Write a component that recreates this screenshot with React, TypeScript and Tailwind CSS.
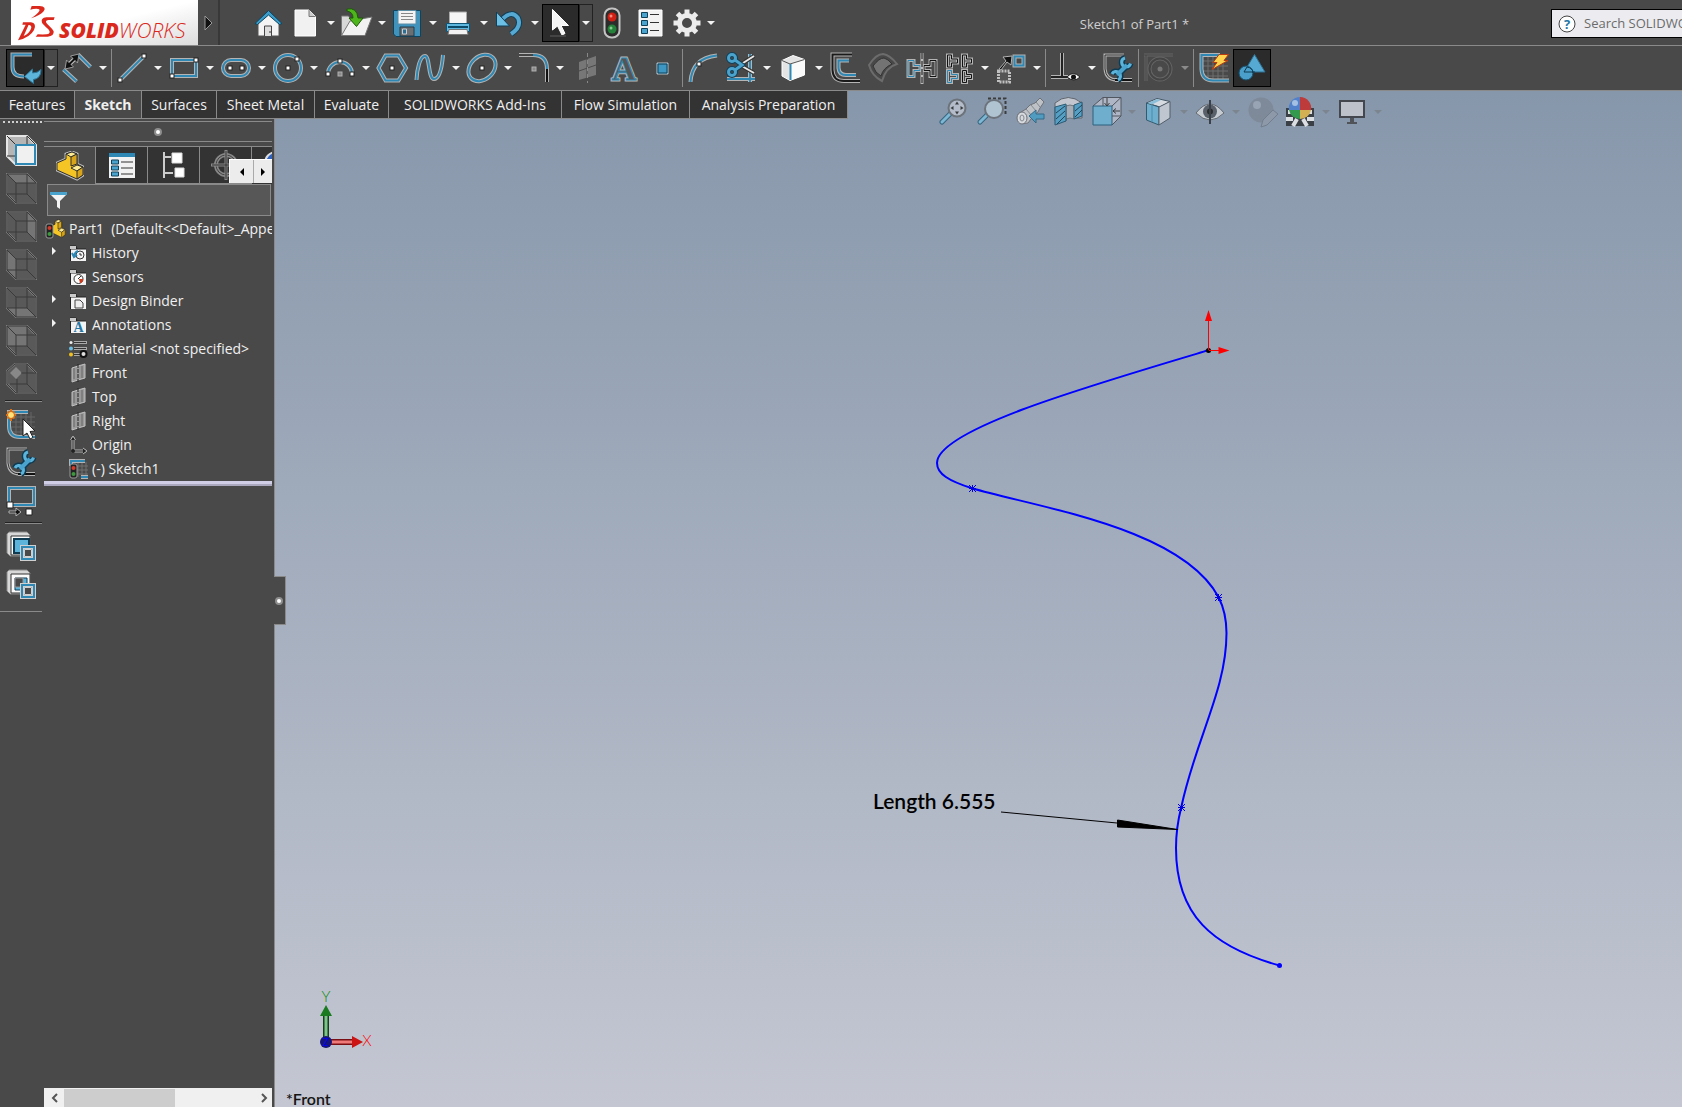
import type { ReactNode } from "react";
import clsx from "clsx";

const BLUE = "#2f88b3";
const HALO = "#b4b4b4";

/* ---------- drawing helpers ---------- */

function Svg({ w = 38, h = 38, children }: { w?: number; h?: number; children: ReactNode }) {
  return (
    <svg width={w} height={h} viewBox={`0 0 ${w} ${h}`} fill="none" className="block shrink-0" aria-hidden="true">
      {children}
    </svg>
  );
}

// coloured line with a light outline round it
function Line({ d, c = BLUE, halo = HALO, w = 2 }: { d: string; c?: string; halo?: string; w?: number }) {
  return (
    <>
      <path d={d} stroke={halo} strokeWidth={w + 2} />
      <path d={d} stroke={c} strokeWidth={w} />
    </>
  );
}

function Node({ x, y, dim }: { x: number; y: number; dim?: boolean }) {
  return <rect x={x - 2} y={y - 2} width="4" height="4" fill={dim ? "#8a8a8a" : "#fff"} stroke={dim ? "#b0b0b0" : "#222"} />;
}

// double-ended spanner, jaws open at the top right and bottom left
function Wrench() {
  const jaws = "M26 9a4.500 4.500 0 1 0 5.500 5.500M13 25a4.500 4.500 0 1 1 6 6";
  return (
    <>
      <path d={jaws} stroke="#0f3b52" strokeWidth="6" />
      <path d="M18 26l10-10" stroke="#0f3b52" strokeWidth="7" />
      <path d={jaws} stroke="#5db4db" strokeWidth="3" />
      <path d="M18 26l10-10" stroke="#4aa3cc" strokeWidth="4" />
    </>
  );
}

/* ---------- title bar icons ---------- */

const HomeIcon = (
  <Svg w={37}>
    <path d="M8 18v14h21V18L18.500 9z" fill="#f4f4f4" stroke="#555" />
    <path d="M14.500 32V22h7v10" fill="#ddd" stroke="#444" />
    <path d="M20 27v2" stroke="#333" />
    <path d="M5 19.500L18.500 6.500 32 19.500l-2.500 1L18.500 11 7.500 20.500z" fill="#3c9cc9" stroke="#0d4560" />
  </Svg>
);
const NewIcon = (
  <Svg w={37}>
    <path d="M8 6h14l6.500 6.500V32H8z" fill="#f1f1f1" stroke="#fff" />
    <path d="M22 6v6.500h6.500" fill="#ccc" stroke="#777" />
  </Svg>
);
const OpenIcon = (
  <Svg w={37}>
    <path d="M3.500 31V12h7l2 3h15v5z" fill="#d8d8d8" stroke="#777" />
    <path d="M3.500 31.500L12 17l22-4-7 18.500z" fill="#f2f2f2" stroke="#777" />
    <path d="M9 5q10-2 11 9h5l-6.500 8.500L11 14h4q0-6-6-7z" fill="#4fb51c" stroke="#1d5a08" />
  </Svg>
);
const SaveIcon = (
  <Svg w={37}>
    <path d="M4.500 6.500h27v26H7l-2.500-2.500z" fill="#3f93bd" stroke="#0d4560" />
    <path d="M9 6.500h18V20H9z" fill="#f3f3f3" stroke="#5c8ca3" />
    <path d="M12 9.500h12M12 12.500h12M12 15.500h12" stroke="#888" />
    <path d="M11 23h14v9H11z" fill="#6a6f73" stroke="#263c48" />
    <path d="M13.500 25h4v5h-4z" fill="#2a6e91" stroke="#ccc" />
  </Svg>
);
const PrintIcon = (
  <Svg w={37}>
    <path d="M9.500 8h17v12h-17z" fill="#f6f6f6" stroke="#aaa" />
    <path d="M6.500 19.500h23v8h-23z" fill="#5db7df" stroke="#0f5474" />
    <path d="M8 23h20" stroke="#0b4a68" strokeWidth="2" />
    <path d="M9 25.500h18l1 5H8z" fill="#f2f2f2" stroke="#777" />
  </Svg>
);
const UndoIcon = (
  <Svg w={37}>
    <path d="M12 14.500Q21 6 27 14q4 9-7 16" stroke="#123f57" strokeWidth="6" />
    <path d="M5.500 8v14h13z" fill="#6cc0e6" stroke="#123f57" />
    <path d="M12 14.500Q21 6 27 14q4 9-7 16" stroke="#55a9d2" strokeWidth="4" />
  </Svg>
);
const SelectIcon = (
  <Svg w={37}>
    <path d="M10.500 5.500V26l5-4 4.500 9 3-1.500-4-8h7.500z" fill="#f5f5f5" stroke="#fff" />
    <path d="M8 32h16" stroke="#444" strokeWidth="2" />
  </Svg>
);
const RebuildIcon = (
  <Svg w={37}>
    <rect x="11.500" y="4.500" width="15" height="29" rx="7" fill="#2c2c2c" stroke="#c4c4c4" strokeWidth="2" />
    <circle cx="19" cy="13" r="4.500" fill="#cf1f14" />
    <circle cx="18" cy="12" r="1.500" fill="#f2877c" />
    <circle cx="19" cy="25" r="4.500" fill="#25813a" />
    <circle cx="18" cy="24" r="1.500" fill="#86cc90" />
  </Svg>
);
const ListIcon = (
  <Svg w={37}>
    <path d="M9 6h23v26H9z" fill="#f2f2f2" stroke="#fff" />
    <path d="M11.500 8.500h6v5h-6zM11.500 16.500h6v5h-6zM11.500 24.500h6v5h-6z" fill="#4aa3cc" stroke="#0e4059" />
    <path d="M20 10.500h9M20 18.500h9M20 26.500h9" stroke="#333" />
  </Svg>
);
const GearIcon = (
  <Svg w={37}>
    <g transform="translate(20 19)" stroke="#ececec">
      <circle r="7.500" strokeWidth="5" />
      <path
        d="M0-9V-13.500M0 9V13.500M-9 0H-13.500M9 0H13.500M6.500-6.500L9.500-9.500M-6.500 6.500L-9.500 9.500M6.500 6.500L9.500 9.500M-6.500-6.500L-9.500-9.500"
        strokeWidth="5"
      />
    </g>
  </Svg>
);

/* ---------- sketch toolbar icons ---------- */

const ExitSketchIcon = (
  <Svg>
    <Line d="M26 5.500H6.500V18Q6.500 27.500 18 27.500" />
    <path d="M18.500 27.500l8-7.500v4q5 0 8.500-3.500 0 9-7.500 10v4z" fill="#5db4db" stroke="#2b7599" />
  </Svg>
);
const DimensionIcon = (
  <Svg>
    <Line d="M20 5.500L32.500 18M5.500 20.500L18.500 32.500" />
    <path d="M10 16.500l8.500-8.500" stroke="#c8c8c8" strokeWidth="4" />
    <path d="M7 20l1.500-9 7 7zM21 5l-8.500 2 7 7z" fill="#111" stroke="#999" />
    <path d="M10 16.500l8-8" stroke="#111" strokeWidth="2" />
  </Svg>
);
const LineIcon = (
  <Svg>
    <Line d="M7 31L31 7" />
    <Node x={7} y={31} />
    <Node x={31} y={7} />
  </Svg>
);
const RectIcon = (
  <Svg>
    <Line d="M7 11h24v16H7z" />
    <Node x={31} y={11} />
    <Node x={7} y={27} />
  </Svg>
);
const SlotIcon = (
  <Svg>
    <Line d="M14 11h10a8 8 0 0 1 0 16H14a8 8 0 0 1 0-16z" />
    <Node x={13} y={19} />
    <Node x={25} y={19} />
  </Svg>
);
const CircleIcon = (
  <Svg>
    <Line d="M19 6a13 13 0 1 1 0 26a13 13 0 1 1 0-26z" />
    <Node x={19} y={19} />
    <Node x={28} y={10} />
  </Svg>
);
const ArcIcon = (
  <Svg>
    <Line d="M7 25a12 12 0 0 1 24 0" />
    <Node x={7} y={25} />
    <Node x={31} y={25} />
    <Node x={19} y={12} />
    <Node x={19} y={25} dim />
  </Svg>
);
const PolygonIcon = (
  <Svg>
    <Line d="M5.500 19L12.500 6.500h13L33 19l-7.500 12.500h-13z" />
    <Node x={19} y={19} />
  </Svg>
);
const SplineIcon = (
  <Svg>
    <Line d="M5.500 31C6 20 9 7 14 7S17 30 23 30S31 18 32 6" />
  </Svg>
);
const EllipseIcon = (
  <Svg>
    <g transform="rotate(-42 19 19)">
      <ellipse cx="19" cy="19" rx="15" ry="11.500" stroke={HALO} strokeWidth="4" />
      <ellipse cx="19" cy="19" rx="15" ry="11.500" stroke={BLUE} strokeWidth="2" />
    </g>
    <Node x={19} y={19} />
  </Svg>
);
const FilletIcon = (
  <Svg>
    <Line d="M4 6h14" c="#444" />
    <Line d="M32 19v14" c="#111" />
    <Line d="M18 6q14 0 14 14" />
    <Node x={19} y={20} dim />
  </Svg>
);
const PlaneIcon = (
  <Svg>
    <path d="M12 13l17-6v19l-17 5z" fill="#777" />
    <path d="M12 22l17-6M20 4v30" stroke="#4a4a4a" />
    <path d="M20.500 4v30" stroke="#888" strokeDasharray="4 3" />
  </Svg>
);
const TextIcon = (
  <Svg>
    <text x="19" y="31" textAnchor="middle" fontFamily="Liberation Serif, serif" fontWeight="700" fontSize="34" fill="#b4b4b4" stroke="#b4b4b4" strokeWidth="3">
      A
    </text>
    <text x="19" y="31" textAnchor="middle" fontFamily="Liberation Serif, serif" fontWeight="700" fontSize="34" fill="#555" stroke="#2f88b3" aria-hidden="true">
      A
    </text>
  </Svg>
);
const PointIcon = (
  <Svg>
    <path d="M14 14h11v11H14z" fill="#3d97c2" stroke="#b9c4ca" />
    <path d="M15 15h9v9h-9z" stroke="#0e4059" />
  </Svg>
);
const ConvertIcon = (
  <Svg>
    <Line d="M6.500 33Q8 9 33 6.500" />
    <Node x={15} y={15} />
  </Svg>
);
const TrimIcon = (
  <Svg>
    <Line d="M28 5v28M5 30h28" />
    <path d="M18 16l14-9M18 16l14 8" stroke="#333" strokeWidth="4" />
    <path d="M18 16l14-9M18 16l14 8" stroke="#e8e8e8" strokeWidth="2" />
    <circle cx="10" cy="9" r="3.500" stroke="#123f57" strokeWidth="5" />
    <circle cx="10" cy="23" r="3.500" stroke="#123f57" strokeWidth="5" />
    <path d="M13 11l7 5-7 5" stroke="#123f57" strokeWidth="5" />
    <circle cx="10" cy="9" r="3.500" stroke="#4aa3cc" strokeWidth="3" />
    <circle cx="10" cy="23" r="3.500" stroke="#4aa3cc" strokeWidth="3" />
    <path d="M13 11l7 5-7 5" stroke="#4aa3cc" strokeWidth="3" />
  </Svg>
);
const SolidCubeIcon = (
  <Svg>
    <path d="M8 11.500L19 6.500l11.500 4V26L16 31.500 8 27z" fill="#e4e4e4" stroke="#fff" />
    <path d="M16 15l14.500-4.500V26L16 31.500z" fill="#fafafa" />
    <path d="M8 11.500l8 3.500 14.500-4.500" stroke="#555" />
    <path d="M16.500 15v16" stroke={BLUE} strokeWidth="2" />
  </Svg>
);
const OffsetIcon = (
  <Svg>
    <Line d="M26 5.500H6.500V21Q7 32 18 32H34" c="#1a1a1a" />
    <Line d="M23 11.500H12.500V19Q13 26 20 26H30" />
  </Svg>
);
const SurfaceOffsetIcon = (
  <Svg>
    <path d="M5 16Q12 5 19 5q7 1 14 10-11 3-15 17Q8 27 5 16z" fill="#484848" stroke="#6c6c6c" strokeWidth="2" />
    <path d="M9 17q6-8 11-8 4 1 8 6-9 4-11 12-6-3-8-10z" fill="#737373" stroke="#333" />
  </Svg>
);
const MirrorIcon = (
  <Svg>
    <Line d="M6 11.500h6v5h6v5h-6v6H6z" w={1} />
    <Line d="M34 11.500h-6v5h-6v5h6v6h6z" c="#111" w={1} />
    <path d="M20 4v31" stroke="#bbb" strokeWidth="3" />
    <path d="M20 4v31" stroke="#111" strokeDasharray="6 2" />
  </Svg>
);
const PatternIcon = (
  <Svg>
    <Line d="M7.500 6h4v4h6v4h-6v4h-4z" c="#111" w={1} />
    <Line d="M22.500 6h4v4h5v4h-5v4h-4z" c="#111" w={1} />
    <Line d="M7.500 21.500h4v4h6v4h-6v4h-4z" w={1} />
    <Line d="M22.500 21.500h4v4h5v4h-5v4h-4z" c="#111" w={1} />
  </Svg>
);
const MoveIcon = (
  <Svg>
    <Line d="M22.500 7.500h9v9h-9z" />
    <path d="M6.500 22h11v11h-11z" fill="#555" stroke="#c0c0c0" strokeWidth="3" strokeDasharray="2 1" />
    <path d="M7 20l7-8-3-4 9-1-1 9-4-3-6 8z" fill="#111" stroke="#b4b4b4" />
  </Svg>
);
const RelationsIcon = (
  <Svg>
    <Line d="M15 4v24M4 28h17" c="#222" />
    <path d="M20 28q6-7 13 0-6 6-13 0z" fill="#f4f4f4" stroke="#222" />
    <circle cx="26.500" cy="28" r="2.500" fill="#111" />
  </Svg>
);
const RepairIcon = (
  <Svg>
    <Line d="M25 6H6V20Q7 31 18 31" c="#333" w={1} />
    <Line d="M16 31H33" c="#111" />
    <Wrench />
  </Svg>
);
const QuickSnapIcon = (
  <Svg>
    <Line d="M4 6h29M6 6v26" c="#444" halo="#666" w={1} />
    <circle cx="20" cy="20" r="10.500" stroke="#666" strokeWidth="4" />
    <circle cx="20" cy="20" r="10.500" stroke="#444" strokeWidth="2" />
    <circle cx="20" cy="20" r="2.500" fill="#777" />
  </Svg>
);
const RapidIcon = (
  <Svg>
    <path d="M13 6v26M18 6v26M23 6v26M28 6v26M7 12h26M7 17h26M7 22h26M7 27h26" stroke="#6e6e6e" />
    <Line d="M25 6H6.500V20Q7 31.500 18 31.500H34" />
    <path d="M24 5.500h9.500l-4.500 6h4L17 20.500l5-7h-4z" fill="#ffd34d" stroke="#b83a10" />
  </Svg>
);
const ShapesIcon = (
  <Svg>
    <path d="M21.500 5.500L32 23H11z" fill="#55a9d2" stroke="#2d6f91" />
    <circle cx="13" cy="24" r="7" fill="#4aa0ca" stroke="#17506e" />
    <path d="M11 23h11M11 23l3-5q6 1 6 6" stroke="#0e3a52" />
  </Svg>
);

/* ---------- view toolbar icons ---------- */

const ZoomFitIcon = (
  <Svg>
    <path d="M15 21l-8 8" stroke="#2c5f7a" strokeWidth="5" strokeLinecap="round" />
    <path d="M15 21l-8 8" stroke="#7dbbd8" strokeWidth="3" strokeLinecap="round" />
    <circle cx="22" cy="15" r="8.500" fill="#b8c1cc" stroke="#6a6f76" strokeWidth="2" />
    <path d="M22 8.500l2 3h-4zM22 21.500l2-3h-4zM15.500 15l3-2v4zM28.500 15l-3-2v4z" fill="#333" />
  </Svg>
);
const ZoomAreaIcon = (
  <Svg>
    <path d="M15 5.500h17.500v17" stroke="#333" strokeWidth="2" strokeDasharray="3 2" />
    <path d="M14 22l-7 7" stroke="#2c5f7a" strokeWidth="5" strokeLinecap="round" />
    <path d="M14 22l-7 7" stroke="#7dbbd8" strokeWidth="3" strokeLinecap="round" />
    <circle cx="21" cy="16" r="9" fill="#b4c8d6" stroke="#6a6f76" strokeWidth="2" />
  </Svg>
);
const PrevViewIcon = (
  <Svg>
    <path d="M7 21l8-5 4-4 5-2 5-5 4 4-4 6-2 4-4 3-6 8q-10 3-10-9z" fill="#c4c7cb" stroke="#6b6e73" />
    <path d="M15 16l6 7M20 12l5 6M25 9l4 5" stroke="#85888d" />
    <ellipse cx="11" cy="25" rx="5" ry="6" fill="#dfe1e4" stroke="#6b6e73" />
    <ellipse cx="11" cy="25" rx="2" ry="3" stroke="#85888d" />
    <path d="M18 23l7-6v4h8v5h-8v4z" fill="#4a9dc4" stroke="#2d6685" />
  </Svg>
);
const SectionIcon = (
  <Svg>
    <path d="M6 10q13-11 27 0v15h-8V13h-8v15H6z" fill="#c9cdd3" stroke="#5a6067" />
    <path d="M17 13q4-2 8 0v13q-4-2-8 0z" fill="#a9afb8" stroke="#6d737a" />
    <path d="M6 14l11-3v17l-11 4zM25 12l8-3v14l-8 3z" fill="#4fa0c6" stroke="#24546d" />
    <path d="M7 20l9-7M7 26l9-8M8 31l8-8M26 18l7-6M26 24l7-7" stroke="#163c50" />
  </Svg>
);
const OrientationIcon = (
  <Svg>
    <path d="M6 13l10-8.500h18V23l-9 9" fill="#b4bac8" stroke="#4c5158" />
    <path d="M16 4.500V13M25 13l9-8.500M25 23h9" stroke="#4c5158" />
    <path d="M6 13h19v19H6z" fill="#6db1d1" stroke="#245b78" />
    <path d="M20 5v8M17.500 10l2.500 3 2.500-3M33 18h-7M29 15.500l-3 2.500 3 2.500" stroke="#333" />
  </Svg>
);
const DisplayStyleIcon = (
  <Svg>
    <path d="M7.500 10L18 5.500l13 3-10 5.500z" fill="#dfe3e7" stroke="#3c4f5c" />
    <path d="M7.500 10L20 14v18L7.500 27z" fill="#6db1d1" stroke="#2c5467" />
    <path d="M20 14l11-5.500V25l-11 7z" fill="#c6ccd4" stroke="#4d5964" />
    <path d="M8.500 10L18 6l4 1-9 4.500z" fill="#8cc4de" />
    <path d="M13 12v17" stroke="#3f8db2" />
  </Svg>
);
const HideShowIcon = (
  <Svg>
    <path d="M5 20Q19 2 33 20 19 34 5 20z" fill="#cdd1d6" stroke="#5f656c" />
    <circle cx="19" cy="18.500" r="7" fill="#555b63" />
    <circle cx="19" cy="18.500" r="3" fill="#222" />
    <path d="M19 7v24" stroke="#33383e" strokeWidth="2" />
  </Svg>
);
const AppearanceIcon = (
  <Svg>
    <circle cx="18" cy="17" r="12.500" fill="#7e8998" />
    <circle cx="14" cy="12" r="4" fill="#9aa5b4" />
    <path d="M18 34l2-7 10-10 5 4-11 11z" fill="#8e99a8" stroke="#707b8a" />
  </Svg>
);
const SceneIcon = (
  <Svg>
    <path d="M5 15h28v18H5z" fill="#33373c" />
    <path d="M7 19h5M26 19h5M5 26h7M26 26h7M12 33l4-7M26 33l-4-7" stroke="#e4e6e9" strokeWidth="4" />
    <path d="M19 4a11 11 0 0 0-11 13h11z" fill="#4d7fce" />
    <path d="M19 4a11 11 0 0 1 11 13H19z" fill="#c3322f" />
    <path d="M8 17a11 11 0 0 0 11 9v-9z" fill="#2a9a43" />
    <path d="M30 17a11 11 0 0 1-11 9v-9z" fill="#dcb34a" />
    <circle cx="14" cy="10" r="3" fill="#a9c4ea" />
  </Svg>
);
const MonitorIcon = (
  <Svg>
    <path d="M7 8h24v16H7z" fill="#c3c7ce" stroke="#3d4044" strokeWidth="2" />
    <path d="M17 25h4v4h3v2H14v-2h3z" fill="#4a4d51" />
  </Svg>
);

/* ---------- buttons ---------- */

type Tool = {
  label: string;
  icon: ReactNode;
  menu?: boolean;
  on?: boolean;
  off?: boolean;
  sep?: boolean; // divider after this tool
};

function Caret({ color = "#f2f2f2" }: { color?: string }) {
  return (
    <svg width="8" height="4" viewBox="0 0 8 4" className="block" aria-hidden="true">
      <path d="M0 0h8L4 4z" fill={color} />
    </svg>
  );
}

function ToolButton({ tool, caret }: { tool: Tool; caret?: string }) {
  return (
    <>
      <button
        type="button"
        aria-label={tool.label}
        className={clsx("h-[38px] shrink-0", tool.on && "bg-[#2b2b2b] outline-1 -outline-offset-1 outline-black")}
      >
        {tool.icon}
      </button>
      {tool.menu && (
        <button
          type="button"
          aria-label={`${tool.label} options`}
          className={clsx(
            "flex h-[38px] w-[14px] shrink-0 items-center justify-center",
            tool.on && "outline-1 -outline-offset-1 outline-[#222]"
          )}
        >
          <Caret color={tool.off ? "#8a8a8a" : caret} />
        </button>
      )}
      {tool.sep && <span className="mx-px h-[38px] w-px shrink-0 bg-[#8a8a8a]" />}
    </>
  );
}

const FILE_TOOLS: Tool[] = [
  { label: "Home", icon: HomeIcon },
  { label: "New", icon: NewIcon, menu: true },
  { label: "Open", icon: OpenIcon, menu: true },
  { label: "Save", icon: SaveIcon, menu: true },
  { label: "Print", icon: PrintIcon, menu: true },
  { label: "Undo", icon: UndoIcon, menu: true },
  { label: "Select", icon: SelectIcon, menu: true, on: true },
  { label: "Rebuild", icon: RebuildIcon },
  { label: "File properties", icon: ListIcon },
  { label: "Options", icon: GearIcon, menu: true },
];

const SKETCH_TOOLS: Tool[] = [
  { label: "Exit sketch", icon: ExitSketchIcon, menu: true, on: true },
  { label: "Smart dimension", icon: DimensionIcon, menu: true, sep: true },
  { label: "Line", icon: LineIcon, menu: true },
  { label: "Rectangle", icon: RectIcon, menu: true },
  { label: "Slot", icon: SlotIcon, menu: true },
  { label: "Circle", icon: CircleIcon, menu: true },
  { label: "Arc", icon: ArcIcon, menu: true },
  { label: "Polygon", icon: PolygonIcon },
  { label: "Spline", icon: SplineIcon, menu: true },
  { label: "Ellipse", icon: EllipseIcon, menu: true },
  { label: "Fillet", icon: FilletIcon, menu: true },
  { label: "Plane", icon: PlaneIcon },
  { label: "Text", icon: TextIcon },
  { label: "Point", icon: PointIcon, sep: true },
  { label: "Convert entities", icon: ConvertIcon },
  { label: "Trim entities", icon: TrimIcon, menu: true },
  { label: "Convert solid", icon: SolidCubeIcon, menu: true },
  { label: "Offset entities", icon: OffsetIcon },
  { label: "Offset on surface", icon: SurfaceOffsetIcon },
  { label: "Mirror entities", icon: MirrorIcon },
  { label: "Linear pattern", icon: PatternIcon, menu: true },
  { label: "Move entities", icon: MoveIcon, menu: true, sep: true },
  { label: "Display relations", icon: RelationsIcon, menu: true },
  { label: "Repair sketch", icon: RepairIcon, sep: true },
  { label: "Quick snaps", icon: QuickSnapIcon, menu: true, off: true, sep: true },
  { label: "Rapid sketch", icon: RapidIcon },
  { label: "Shaded contours", icon: ShapesIcon, on: true },
];

const VIEW_TOOLS: Tool[] = [
  { label: "Zoom to fit", icon: ZoomFitIcon },
  { label: "Zoom to area", icon: ZoomAreaIcon },
  { label: "Previous view", icon: PrevViewIcon },
  { label: "Section view", icon: SectionIcon },
  { label: "View orientation", icon: OrientationIcon, menu: true },
  { label: "Display style", icon: DisplayStyleIcon, menu: true },
  { label: "Hide or show items", icon: HideShowIcon, menu: true },
  { label: "Edit appearance", icon: AppearanceIcon },
  { label: "Apply scene", icon: SceneIcon, menu: true },
  { label: "View settings", icon: MonitorIcon, menu: true },
];

/* ---------- title bar ---------- */

function Logo() {
  return (
    <div className="ml-[11px] flex w-[187px] items-center bg-linear-to-br from-white from-50% to-[#dcdcdc] pl-1.5 text-[#da291c]">
      <svg width="38" height="38" viewBox="50 12 114 114" fill="currentColor" className="shrink-0" aria-hidden="true">
        <path d="M94 18H118Q140 20 130 34Q120 46 92 55Q112 42 117 33Q120 26 108 26Q98 26 90 29z" />
        <path d="M68 67H92Q110 70 101 90Q90 112 53 121L76 74H85L70 108Q86 101 92 86Q96 75 84 74H66z" />
        <path d="M163 52H138Q120 54 125 68Q127 72 144 88Q152 97 144 102Q138 104 112 103L106 110H142Q162 108 160 94Q158 88 140 71Q132 62 144 60H160z" />
      </svg>
      <span className="mt-3.5 ml-1 text-[21px] leading-6 italic">
        <b className="font-extrabold">SOLID</b>
        <span className="font-light">WORKS</span>
      </span>
    </div>
  );
}

function TitleBar() {
  return (
    <header className="flex h-[46px] border-b border-[#8a8a8a] bg-[#494949]">
      <Logo />
      <button type="button" aria-label="Show menus" className="flex w-[22px] items-center justify-center border-r-2 border-[#383838]">
        <svg width="9" height="16" viewBox="0 0 9 16" aria-hidden="true">
          <path d="M1 1l7 7-7 7z" fill="#111" stroke="#999" />
        </svg>
      </button>
      <div className="ml-[30px] flex items-center">
        {FILE_TOOLS.map((t) => (
          <ToolButton key={t.label} tool={t} />
        ))}
      </div>
      <h1 className="flex-1 pt-3.5 text-center text-[13px] leading-5 text-[#cfcfcf]">Sketch1 of Part1 *</h1>
      <label className="mt-[9px] flex h-[29px] w-[131px] items-center border border-r-0 border-black bg-[#ebebf0] pl-1.5">
        <svg width="18" height="18" viewBox="0 0 18 18" className="shrink-0" aria-hidden="true">
          <circle cx="9" cy="9" r="8" fill="#fff" stroke="#444" />
          <text x="9" y="14" textAnchor="middle" fontFamily="Open Sans, sans-serif" fontSize="13" fontWeight="700" fill="#2577a5">
            ?
          </text>
        </svg>
        <input
          type="text"
          aria-label="Search help"
          placeholder="Search SOLIDWORKS Help"
          className="ml-2 min-w-0 flex-1 bg-transparent text-[13px] outline-none placeholder:text-[#6b6b6b]"
        />
      </label>
    </header>
  );
}

/* ---------- command tabs ---------- */

const TABS = [
  { label: "Features", w: "w-[75px]" },
  { label: "Sketch", w: "w-[67px]" },
  { label: "Surfaces", w: "w-[75px]" },
  { label: "Sheet Metal", w: "w-[98px]" },
  { label: "Evaluate", w: "w-[74px]" },
  { label: "SOLIDWORKS Add-Ins", w: "w-[173px]" },
  { label: "Flow Simulation", w: "w-[128px]" },
  { label: "Analysis Preparation", w: "w-[158px]" },
];

function CommandTabs() {
  return (
    <nav className="flex h-7">
      {TABS.map((t) => (
        <button
          key={t.label}
          type="button"
          className={clsx(
            "border-r border-b border-[#8a8a8a] text-center text-[14px] whitespace-nowrap text-[#f0f0f0]",
            t.w,
            t.label === "Sketch" ? "bg-[#494949] font-bold" : "bg-[#333]"
          )}
        >
          {t.label}
        </button>
      ))}
    </nav>
  );
}

/* ---------- left strip ---------- */

// shaded face of the wire cube for each disabled view button
const CUBE_FACES = [
  "M1 1H21L30 10H10z",
  "M21 1L30 10V30L21 21z",
  "M1 1L10 10V30L1 21z",
  "M1 21H21L30 30H10z",
  "M1 1H21V21H1z",
];

function WireCube({ face }: { face: string }) {
  return (
    <Svg w={31} h={31}>
      <path d="M1 1H21L30 10V30H10L1 21z" fill="#595959" stroke="#7c7c7c" strokeWidth="2" />
      <path d={face} fill="#757575" />
      <path d="M1 1H21L30 10V30H10L1 21zM1 1L10 10H30M10 10V30M21 1V21H1M21 21L30 30" stroke="#3a3a3a" />
    </Svg>
  );
}

const FrontCubeIcon = (
  <Svg w={31} h={31}>
    <path d="M1 1H21L30 10V30H10L1 21z" fill="#b5b5b5" stroke="#e6e6e6" strokeWidth="2" />
    <path d="M1 1L10 10M21 1V10M1 21H10M21 1L30 10" stroke="#333" />
    <path d="M10 10H29V29H10z" fill="#f0f0f0" stroke={BLUE} strokeWidth="2" />
  </Svg>
);
const IsoCubeIcon = (
  <Svg w={31} h={31}>
    <path d="M9 1H21L30 10V30H10L1 21V8z" fill="#595959" stroke="#7c7c7c" strokeWidth="2" />
    <path d="M10 4l6 6-6 6-6-6z" fill="#888" />
    <path d="M9 1H21L30 10V30H10L1 21V8zM15 10H30M11 16V30M21 1V21H4M21 21L30 30" stroke="#3a3a3a" />
  </Svg>
);
const NewSketchIcon = (
  <Svg w={31} h={31}>
    <path d="M10 3v26M15 3v26M20 3v26M25 3v26M3 8h26M3 13h26M3 18h26M3 23h26" stroke="#666" />
    <Line d="M22 3H3V17Q3 28 14 28H29" />
    <path d="M5 0v12M0 6h10M1.500 2.500l7 7M8.500 2.500l-7 7" stroke="#e0700f" strokeWidth="2" />
    <circle cx="5" cy="6" r="3.500" fill="#ffe27a" stroke="#d4600f" />
    <path d="M17 10v17l4-3 3 6 3-1.500-3-6 5-.5z" fill="#fff" stroke="#222" />
  </Svg>
);
const RepairSmallIcon = (
  <Svg w={31} h={31}>
    <g transform="translate(-4 -4)">
      <Line d="M25 6H6V20Q7 31 18 31" c="#333" w={1} />
      <Line d="M16 31H33" c="#111" />
      <Wrench />
    </g>
  </Svg>
);
const MoveRectIcon = (
  <Svg w={31} h={31}>
    <Line d="M3 3h25v17H3z" />
    <path d="M1 17h6v6H1zM20 24h6v6h-6z" fill="#fff" stroke="#222" />
    <path d="M3 26h7v-3l5 4-5 4v-3H3z" fill="#111" stroke="#b4b4b4" />
  </Svg>
);
const StackIcon = (
  <Svg w={31} h={31}>
    <path d="M1 3l2-2h18l3 3v18l-3 3H4l-3-3z" fill="#d8d8d8" stroke="#888" />
    <path d="M5 5h19v19H5z" fill="#fafafa" stroke="#333" />
    <path d="M8 8h15v14H8z" fill="#5db4db" stroke="#0f3b52" strokeWidth="2" />
    <Line d="M16 16h12v12H16z" halo="#d0d0d0" />
    <path d="M18.500 18.500h7v7h-7z" fill="#494949" stroke="#d0d0d0" />
  </Svg>
);
const StackOpenIcon = (
  <Svg w={31} h={31}>
    <path d="M1 3l2-2h18l3 3v18l-3 3H4l-3-3z" fill="#d8d8d8" stroke="#888" />
    <path d="M5 5h19v19H5z" fill="#fafafa" stroke="#333" />
    <path d="M9 9h12v12H9z" fill="#5db4db" stroke="#0f3b52" />
    <path d="M9 9h8v9H9z" fill="#494949" stroke="#999" />
    <Line d="M16 16h12v12H16z" halo="#d0d0d0" />
    <path d="M18.500 18.500h7v7h-7z" fill="#494949" stroke="#d0d0d0" />
  </Svg>
);

function StripButton({ label, children }: { label: string; children: ReactNode }) {
  return (
    <button type="button" aria-label={label} className="flex h-[38px] w-full items-center justify-center">
      {children}
    </button>
  );
}

function StripRule() {
  return <div className="my-[3px] ml-[5px] h-0.5 border-t border-b border-t-[#222] border-b-[#8a8a8a]" />;
}

function ViewStrip() {
  return (
    <aside className="w-[42px] shrink-0">
      <div className="mt-0.5 mb-2 ml-[3px] border-t-2 border-dotted border-[#d0d0d0]" />
      <StripButton label="Front view">{FrontCubeIcon}</StripButton>
      {CUBE_FACES.map((face, i) => (
        <StripButton key={face} label={`Standard view ${i + 2}`}>
          <WireCube face={face} />
        </StripButton>
      ))}
      <StripButton label="Isometric view">{IsoCubeIcon}</StripButton>
      <StripRule />
      <StripButton label="New sketch">{NewSketchIcon}</StripButton>
      <StripButton label="Repair">{RepairSmallIcon}</StripButton>
      <StripButton label="Move block">{MoveRectIcon}</StripButton>
      <StripRule />
      <StripButton label="Group">{StackIcon}</StripButton>
      <StripButton label="Ungroup">{StackOpenIcon}</StripButton>
      <div className="mt-2 h-px bg-[#8a8a8a]" />
    </aside>
  );
}

/* ---------- feature tree ---------- */

function Folder({ children }: { children?: ReactNode }) {
  return (
    <Svg w={18} h={18}>
      <path d="M1 17V1.500h6l1.500 3H17V17z" fill="#222" />
      <path d="M1 2h6v3H1z" fill="#c9c9c9" />
      <path d="M2 5.500h15V17H2z" fill="#f3f3f3" />
      {children}
    </Svg>
  );
}

const HistoryIcon = (
  <Folder>
    <circle cx="11" cy="11" r="4" stroke="#333" />
    <path d="M11 9v2h2" stroke="#333" />
    <path d="M3 9l2 4 3-2M5 12q1-4 4-5" stroke={BLUE} strokeWidth="2" />
  </Folder>
);
const SensorsIcon = (
  <Folder>
    <circle cx="9.500" cy="11" r="4.500" fill="#fff" stroke="#333" />
    <path d="M9 11l3-3" stroke="#333" />
    <path d="M10 11h4q0 4-3 4z" fill="#d43a1a" />
  </Folder>
);
const BinderIcon = (
  <Folder>
    <path d="M6 8h5l3 3v5H6z" fill="#eee" stroke="#444" />
  </Folder>
);
const AnnotationsIcon = (
  <Folder>
    <text x="9.500" y="16" textAnchor="middle" fontFamily="Liberation Serif, serif" fontSize="14" fontWeight="700" fill="#2577a5">
      A
    </text>
  </Folder>
);
const MaterialIcon = (
  <Svg w={19} h={18}>
    <path d="M5 2.500h13M5 8.500h13M5 14.500h8" stroke="#a8a8a8" strokeWidth="3" />
    <path d="M5 2.500h12M5 8.500h12M5 14.500h8" stroke="#333" />
    <circle cx="2" cy="2.500" r="1.500" fill="#eee" />
    <circle cx="2" cy="8.500" r="2" fill="#6cc0e6" />
    <circle cx="2" cy="14.500" r="2" fill="#f0c020" />
    <circle cx="14.500" cy="14" r="3" fill="#ddd" stroke="#111" strokeWidth="2" />
  </Svg>
);
const RefPlaneIcon = (
  <Svg w={18} h={20}>
    <path d="M3 5l6-2 7-2v14l-7 2-6 2z" fill="#999" stroke="#c0c0c0" />
    <path d="M9 1v18" stroke="#222" strokeDasharray="4 1" />
    <path d="M5 5v11M13 3v12" stroke="#666" />
  </Svg>
);
const OriginIcon = (
  <Svg w={19} h={20}>
    <path d="M4 2v14h13" stroke="#b4b4b4" strokeWidth="3" />
    <path d="M4 3v13h12" stroke="#222" />
    <path d="M1.500 5L4 1l2.500 4M14 13l4 3-4 3" fill="#222" stroke="#b4b4b4" />
    <circle cx="4" cy="16" r="2" fill="#222" />
  </Svg>
);
const SketchItemIcon = (
  <Svg w={19} h={20}>
    <path d="M9 3v15M13 3v15M17 3v15M7 7h12M7 11h12M7 15h12" stroke="#707070" />
    <Line d="M16 2H2v5M12 18h7" />
    <rect x="1" y="5" width="7" height="14" rx="2" fill="#222" stroke="#999" />
    <circle cx="4.500" cy="9" r="2" fill="#d43a2a" />
    <circle cx="4.500" cy="15" r="2" fill="#3c9a3c" />
  </Svg>
);

function PartShape() {
  return (
    <>
      <path d="M1 12L10 8V3l6-2 5 2v10l6 3v8l-6 4-20-9z" fill="#f5c526" stroke="#2e2e2e" />
      <path d="M10 3l6-2 5 2-6 3zM15 17l6-3 6 2-6 4z" fill="#fdeb94" stroke="#2e2e2e" />
      <path d="M21 20v8l6-4v-8zM15 6v9l6-2V3z" fill="#d8a51a" stroke="#2e2e2e" />
    </>
  );
}

const TREE: { label: string; icon: ReactNode; open?: boolean }[] = [
  { label: "History", icon: HistoryIcon, open: true },
  { label: "Sensors", icon: SensorsIcon },
  { label: "Design Binder", icon: BinderIcon, open: true },
  { label: "Annotations", icon: AnnotationsIcon, open: true },
  { label: "Material <not specified>", icon: MaterialIcon },
  { label: "Front", icon: RefPlaneIcon },
  { label: "Top", icon: RefPlaneIcon },
  { label: "Right", icon: RefPlaneIcon },
  { label: "Origin", icon: OriginIcon },
  { label: "(-) Sketch1", icon: SketchItemIcon },
];

const PANEL_TABS: { label: string; icon: ReactNode }[] = [
  {
    label: "Feature manager",
    icon: (
      <Svg w={28} h={30}>
        <path d="M1 12L10 8V3l6-2 5 2v10l6 3v8l-6 4-20-9z" stroke="#bbb" strokeWidth="3" />
        <PartShape />
      </Svg>
    ),
  },
  {
    label: "Property manager",
    icon: (
      <Svg w={28} h={28}>
        <path d="M1 2h26v25H1z" fill="#f2f2f2" />
        <path d="M1 2h26v4H1z" fill={BLUE} />
        <path d="M3.500 9h7v4h-7zM3.500 15h7v4h-7zM3.500 21h7v4h-7z" fill="#4aa3cc" stroke="#0e4059" />
        <path d="M13 11h12M13 17h12M13 23h12" stroke="#333" />
      </Svg>
    ),
  },
  {
    label: "Configuration manager",
    icon: (
      <Svg w={28} h={28}>
        <path d="M4 1v26M4 6h7M4 22h9" stroke="#ccc" strokeWidth="2" />
        <path d="M12 2h10v10H12zM15 17h9v9h-9z" fill="#fff" stroke="#ddd" />
      </Svg>
    ),
  },
  {
    label: "Dimension manager",
    icon: (
      <Svg w={30} h={30}>
        <circle cx="15" cy="15" r="10" stroke="#888" strokeWidth="4" />
        <circle cx="15" cy="15" r="10" stroke="#444" strokeWidth="1" />
        <path d="M15 0v30M0 15h30" stroke="#888" strokeWidth="3" />
        <path d="M15 1v28M1 15h28" stroke="#333" />
      </Svg>
    ),
  },
];

function PanelTabs() {
  return (
    <div className="relative mt-1 flex h-[38px] overflow-hidden border-t border-[#8a8a8a]">
      {PANEL_TABS.map((t, i) => (
        <button
          key={t.label}
          type="button"
          aria-label={t.label}
          className={clsx(
            "flex w-[52px] shrink-0 items-center justify-center border-r border-[#8a8a8a]",
            i > 0 && "border-b bg-[#333]"
          )}
        >
          {t.icon}
        </button>
      ))}
      <span className="flex-1 bg-[#333] pl-3">
        <span className="mt-1 block size-6 rounded-full border-2 border-[#ddd] bg-[#2f62c0]" />
      </span>
      <div className="absolute right-0 bottom-px flex h-6 w-[43px] gap-px border-t border-l border-white bg-[#aaa]">
        <button type="button" aria-label="Scroll tabs left" className="flex flex-1 items-center justify-center bg-[#ececec]">
          <svg width="4" height="8" aria-hidden="true">
            <path d="M4 0v8L0 4z" />
          </svg>
        </button>
        <button type="button" aria-label="Scroll tabs right" className="flex w-[18px] items-center justify-center bg-[#ececec]">
          <svg width="4" height="8" aria-hidden="true">
            <path d="M0 0v8l4-4z" />
          </svg>
        </button>
      </div>
    </div>
  );
}

function Dot() {
  return <span className="block size-2 rounded-full border-2 border-[#8e8e8e] bg-white" />;
}

function FeaturePanel() {
  return (
    <section className="ml-0.5 flex w-[228px] shrink-0 flex-col pt-0.5">
      <div className="flex h-[21px] items-center justify-center border-t border-b border-[#8a8a8a]">
        <Dot />
      </div>
      <PanelTabs />
      <label className="mr-px ml-[3px] flex h-8 items-center border border-[#8a8a8a] bg-[#575757] pl-0.5">
        <svg width="17" height="18" viewBox="0 0 17 18" aria-hidden="true">
          <path d="M0 3h17l-7 7v8l-3-2v-6z" fill="#f4f4f4" />
          <path d="M0 1h17v3H0z" fill="#4aa3cc" />
        </svg>
        <input type="text" aria-label="Filter tree" className="min-w-0 flex-1 bg-transparent outline-none" />
      </label>

      <ul className="mt-px text-[14px] leading-6 text-[#f0f0f0]">
        <li className="flex h-6 items-center overflow-hidden pl-px whitespace-pre">
          <svg width="21" height="20" viewBox="0 0 21 20" fill="none" className="mr-[3px] shrink-0" aria-hidden="true">
            <g transform="translate(4 0) scale(.6 .66)">
              <PartShape />
            </g>
            <rect x="1" y="5" width="7" height="14" rx="2" fill="#222" stroke="#999" />
            <circle cx="4.500" cy="9" r="2" fill="#d43a2a" />
            <circle cx="4.500" cy="15" r="2" fill="#3c9a3c" />
          </svg>
          {"Part1  (Default<<Default>_Appearance"}
        </li>
        {TREE.map((n) => (
          <li key={n.label} className="flex h-6 items-center pl-2">
            <span className="w-[17px] shrink-0">
              {n.open && (
                <svg width="4" height="8" className="mb-1 block" aria-hidden="true">
                  <path d="M0 0v8l4-4z" fill="#f2f2f2" />
                </svg>
              )}
            </span>
            <span className="w-[23px] shrink-0">{n.icon}</span>
            <span className="whitespace-nowrap">{n.label}</span>
          </li>
        ))}
      </ul>
      <div className="h-[5px] border-b-2 border-[#a9a8bf] bg-[#cfcee6]" />

      <div className="mt-auto flex h-[19px] items-center bg-[#f0f0f0]">
        <button type="button" aria-label="Scroll left" className="flex h-full w-5 items-center justify-center">
          <svg width="7" height="10" fill="none" stroke="#555" strokeWidth="2" aria-hidden="true">
            <path d="M6 1L2 5l4 4" />
          </svg>
        </button>
        <span className="mt-px h-[18px] w-[111px] bg-[#cdcdcd]" />
        <button type="button" aria-label="Scroll right" className="ml-auto flex h-full w-4 items-center justify-center">
          <svg width="7" height="10" fill="none" stroke="#555" strokeWidth="2" aria-hidden="true">
            <path d="M1 1l4 4-4 4" />
          </svg>
        </button>
      </div>
    </section>
  );
}

/* ---------- graphics area ---------- */

const SPLINE =
  "M1208.300 350.300C1085 387 937 430 937 463C937 474 949 481 972 488.300C1040 508 1181 528 1218.500 597" +
  "C1223 606 1226.500 620 1226.500 633C1226.500 690 1196 738 1181.300 807C1178 820 1176 835 1176 848" +
  "C1176 915 1212 947 1279.500 965.500";

const SPLINE_POINTS = [
  [972.5, 488.5],
  [1218.5, 597.5],
  [1181.5, 807.5],
];

function SketchDrawing() {
  return (
    <svg
      width="440"
      height="680"
      viewBox="860 300 440 680"
      fill="none"
      className="absolute top-[209px] left-[860px]"
      aria-label="Sketch1"
    >
      <path d={SPLINE} stroke="#0000ff" strokeWidth="2" />
      {SPLINE_POINTS.map(([x, y]) => (
        <path key={x} d={`M${x - 3.5} ${y}h7M${x} ${y - 3.5}v7M${x - 3.5} ${y - 3.5}l7 7M${x + 3.5} ${y - 3.5}l-7 7`} stroke="#0000e0" />
      ))}
      <circle cx="1279.500" cy="965.500" r="2.500" fill="#0000ff" />
      <circle cx="1208.500" cy="350.500" r="2.500" fill="#000" />
      <path d="M1208.500 350V320M1209 350.500H1220" stroke="#f00" />
      <path d="M1208.500 310l3.500 11h-7zM1229.500 350.500l-11 3.500v-7z" fill="#f00" />
      <path d="M1001 812l116 11" stroke="#000" />
      <path d="M1117.500 820v7l60 2.500z" fill="#000" stroke="#000" />
    </svg>
  );
}

function Triad() {
  return (
    <svg width="60" height="66" viewBox="316 986 60 66" fill="none" className="absolute bottom-[55px] left-[316px]" aria-label="Axes">
      <path d="M326 1040v-26" stroke="#15401a" strokeWidth="6" />
      <path d="M326 1040v-26" stroke="#7cc48a" strokeWidth="3" />
      <path d="M326 1005l6 11h-12z" fill="#1a7a20" />
      <path d="M330 1042h24" stroke="#7a1015" strokeWidth="6" />
      <path d="M330 1042h24" stroke="#f07a7a" strokeWidth="3" />
      <path d="M363 1042l-11 6v-12z" fill="#cc1414" />
      <circle cx="326" cy="1042" r="6" fill="#16167a" />
      <text x="326" y="1046" textAnchor="middle" fontFamily="Inter, sans-serif" fontSize="10" fill="#00f">Z</text>
      <text x="326" y="1002" textAnchor="middle" fontFamily="Lato, sans-serif" fontSize="15" fontWeight="300" fill="#0a8a0a">Y</text>
      <text x="367" y="1046" textAnchor="middle" fontFamily="Lato, sans-serif" fontSize="15" fontWeight="300" fill="#f00">X</text>
    </svg>
  );
}

export default function App() {
  return (
    <div className="flex min-h-screen flex-col overflow-hidden bg-[#494949] font-['Open_Sans','Noto_Sans',sans-serif]">
      <TitleBar />
      <div className="flex h-[45px] items-center border-b border-[#8a8a8a] pb-px pl-1.5">
        {SKETCH_TOOLS.map((t) => (
          <ToolButton key={t.label} tool={t} />
        ))}
      </div>

      <main className="relative flex flex-1 flex-col bg-linear-to-b from-[#8797ab] to-[#c4c7d2]">
        <CommandTabs />
        <div className="relative flex w-[275px] flex-1 border-r border-[#8a8a8a] bg-[#494949]">
          <ViewStrip />
          <FeaturePanel />
          <button
            type="button"
            aria-label="Collapse panel"
            className="absolute top-[457px] left-[274px] flex h-[49px] w-3 items-center border border-l-0 border-[#8a8a8a] bg-[#494949] pl-px"
          >
            <Dot />
          </button>
        </div>

        <div className="absolute top-0.5 left-[935px] flex opacity-90">
          {VIEW_TOOLS.map((t) => (
            <ToolButton key={t.label} tool={t} caret="#7b828c" />
          ))}
        </div>
        <SketchDrawing />
        <p className="absolute top-[698px] left-[873px] font-['Lato',sans-serif] text-[21px] leading-6 font-semibold text-black">Length 6.555</p>
        <Triad />
        <p className="absolute bottom-0 left-[286px] font-['Lato',sans-serif] text-[16px] leading-4 font-semibold text-[#151515]">*Front</p>
      </main>
    </div>
  );
}
